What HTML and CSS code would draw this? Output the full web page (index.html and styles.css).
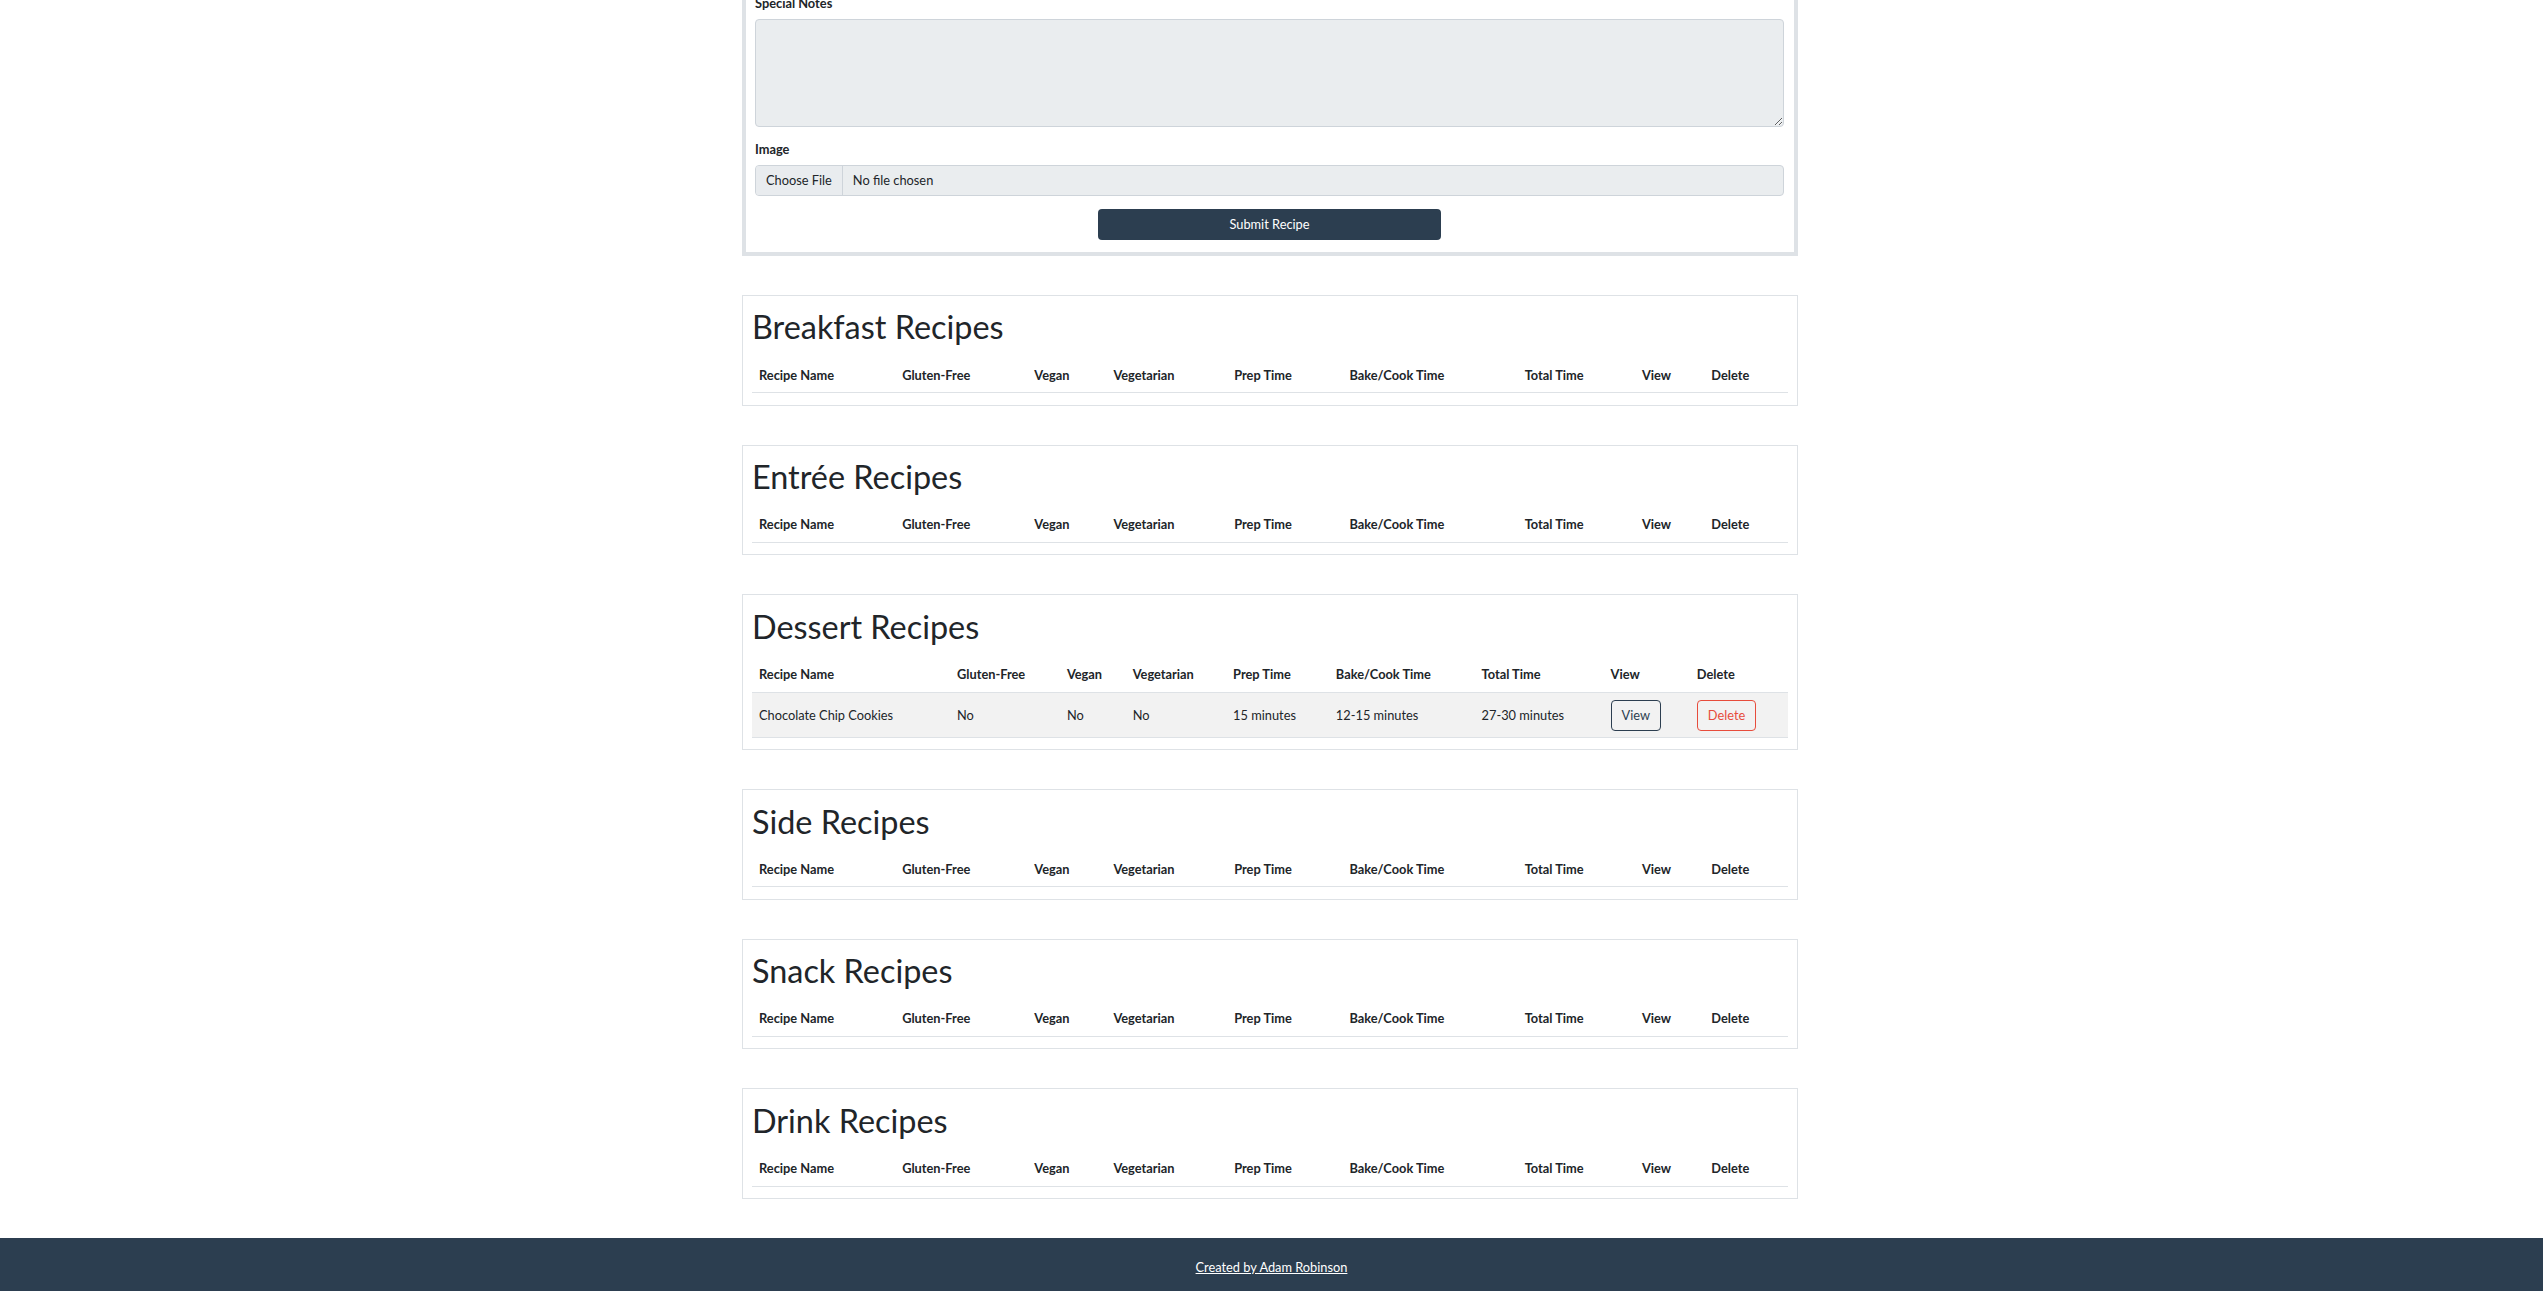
FILE: index.html
```html
<!DOCTYPE html>
<html lang="en">
<head>
<meta charset="utf-8">
<title>Recipes</title>
<link rel="stylesheet" href="styles.css">
</head>
<body>
<main class="page">
  <form class="recipe-form">
    <div class="field">
      <label class="field__label" for="notes">Special Notes</label>
      <textarea class="field__textarea" id="notes"></textarea>
    </div>
    <div class="field field--spaced">
      <label class="field__label">Image</label>
      <div class="file-input">
        <span class="file-input__btn">Choose File</span>
        <span class="file-input__name">No file chosen</span>
      </div>
    </div>
    <div class="form-actions">
      <button type="button" class="btn-submit">Submit Recipe</button>
    </div>
  </form>

  <section class="recipe-card">
    <h2 class="recipe-card__title">Breakfast Recipes</h2>
    <table class="recipe-table">
      <thead><tr><th>Recipe Name</th><th>Gluten-Free</th><th>Vegan</th><th>Vegetarian</th><th>Prep Time</th><th>Bake/Cook Time</th><th>Total Time</th><th>View</th><th>Delete</th></tr></thead>
      <tbody></tbody>
    </table>
  </section>

  <section class="recipe-card">
    <h2 class="recipe-card__title">Entrée Recipes</h2>
    <table class="recipe-table">
      <thead><tr><th>Recipe Name</th><th>Gluten-Free</th><th>Vegan</th><th>Vegetarian</th><th>Prep Time</th><th>Bake/Cook Time</th><th>Total Time</th><th>View</th><th>Delete</th></tr></thead>
      <tbody></tbody>
    </table>
  </section>

  <section class="recipe-card">
    <h2 class="recipe-card__title">Dessert Recipes</h2>
    <table class="recipe-table">
      <thead><tr><th>Recipe Name</th><th>Gluten-Free</th><th>Vegan</th><th>Vegetarian</th><th>Prep Time</th><th>Bake/Cook Time</th><th>Total Time</th><th>View</th><th>Delete</th></tr></thead>
      <tbody>
        <tr>
          <td>Chocolate Chip Cookies</td><td>No</td><td>No</td><td>No</td><td>15 minutes</td><td>12-15 minutes</td><td>27-30 minutes</td>
          <td><button type="button" class="btn-outline btn-outline--dark">View</button></td>
          <td><button type="button" class="btn-outline btn-outline--danger">Delete</button></td>
        </tr>
      </tbody>
    </table>
  </section>

  <section class="recipe-card">
    <h2 class="recipe-card__title">Side Recipes</h2>
    <table class="recipe-table">
      <thead><tr><th>Recipe Name</th><th>Gluten-Free</th><th>Vegan</th><th>Vegetarian</th><th>Prep Time</th><th>Bake/Cook Time</th><th>Total Time</th><th>View</th><th>Delete</th></tr></thead>
      <tbody></tbody>
    </table>
  </section>

  <section class="recipe-card">
    <h2 class="recipe-card__title">Snack Recipes</h2>
    <table class="recipe-table">
      <thead><tr><th>Recipe Name</th><th>Gluten-Free</th><th>Vegan</th><th>Vegetarian</th><th>Prep Time</th><th>Bake/Cook Time</th><th>Total Time</th><th>View</th><th>Delete</th></tr></thead>
      <tbody></tbody>
    </table>
  </section>

  <section class="recipe-card">
    <h2 class="recipe-card__title">Drink Recipes</h2>
    <table class="recipe-table">
      <thead><tr><th>Recipe Name</th><th>Gluten-Free</th><th>Vegan</th><th>Vegetarian</th><th>Prep Time</th><th>Bake/Cook Time</th><th>Total Time</th><th>View</th><th>Delete</th></tr></thead>
      <tbody></tbody>
    </table>
  </section>
</main>
<footer class="site-footer">
  <a class="site-footer__link" href="#">Created by Adam Robinson</a>
</footer>
</body>
</html>
```

FILE: styles.css
```css
* { box-sizing: border-box; }

html, body {
  margin: 0;
  padding: 0;
}

body {
  font-family: Lato, "Open Sans", "Liberation Sans", sans-serif;
  font-size: 12.8px;
  line-height: 1.5;
  color: #212529;
  background: #ffffff;
}

.page {
  width: 1059px;
  margin: 0 auto;
  padding-right: 3px;
  display: flex;
  flex-direction: column;
  gap: 39px;
}

/* ---------- form ---------- */
.recipe-form {
  margin-top: -11px;
  border: 4px solid #dee2e6;
  padding: 0 10px 12px 9px;
  display: flex;
  flex-direction: column;
}

.field {
  display: flex;
  flex-direction: column;
}

.field--spaced {
  margin-top: 12px;
}

.field__label {
  font-weight: 700;
  padding-top: 1px;
  margin-bottom: 6px;
}

.field__textarea {
  height: 108px;
  width: 100%;
  background: #eaedef;
  border: 1px solid #ced4da;
  border-radius: 4px;
  font: inherit;
  padding: 6px 10px;
  resize: vertical;
}

.file-input {
  display: flex;
  align-items: stretch;
  height: 31px;
  background: #eaedef;
  border: 1px solid #ced4da;
  border-radius: 4px;
  overflow: hidden;
}

.file-input__btn {
  display: flex;
  align-items: center;
  padding: 0 10px;
  border-right: 1px solid #ced4da;
  background: #e9ecef;
}

.file-input__name {
  display: flex;
  align-items: center;
  padding-left: 10px;
}

.form-actions {
  margin-top: 12.6px;
  display: flex;
  justify-content: center;
}

.btn-submit {
  width: 33.33%;
  height: 31px;
  background: #2c3e50;
  color: #ffffff;
  border: 0;
  border-radius: 4px;
  font: inherit;
}

/* ---------- recipe cards ---------- */
.recipe-card {
  border: 1px solid #dee2e6;
  padding: 10px 9px 11.3px 9px;
}

.recipe-card__title {
  font-size: 32.4px;
  font-weight: 400;
  line-height: 1.2;
  margin: 2.5px 0 10.8px 0;
  color: #212529;
}

.recipe-table {
  width: 100%;
  border-collapse: collapse;
}

.recipe-table th {
  text-align: left;
  font-weight: 700;
  padding: 7.5px 7px;
  border-bottom: 1px solid #dee2e6;
}

.recipe-table td {
  padding: 7px 7px 6px 7px;
  border-bottom: 1px solid #dee2e6;
  background: #f2f2f2;
  vertical-align: middle;
}

.btn-outline {
  font: inherit;
  line-height: 1.5;
  padding: 5px 10px;
  background: transparent;
  border-radius: 4px;
  border: 1px solid;
}

.btn-outline--dark {
  color: #2c3e50;
  border-color: #2c3e50;
}

.btn-outline--danger {
  color: #e74c3c;
  border-color: #e74c3c;
}

/* ---------- footer ---------- */
.site-footer {
  margin-top: 39px;
  background: #2c3e50;
  padding: 20px 0 15px;
  text-align: center;
}

.site-footer__link {
  color: #ffffff;
  text-decoration: underline;
}
```
